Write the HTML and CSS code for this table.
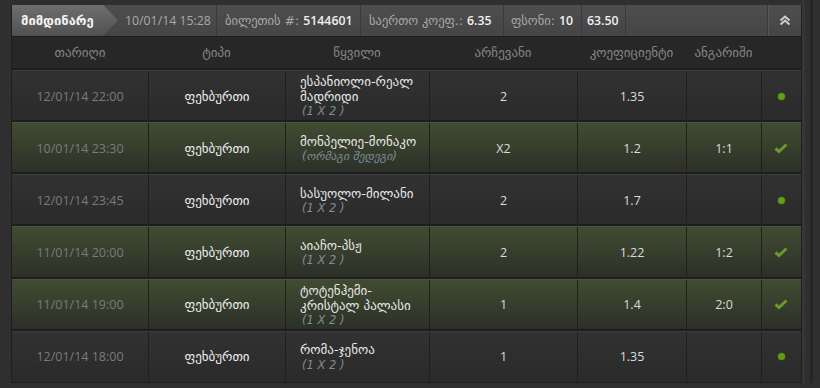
FILE: index.html
```html
<!DOCTYPE html>
<html>
<head>
<meta charset="utf-8">
<link rel="stylesheet" href="styles.css">
</head>
<body>
<div class="wrap">
  <div class="panel">
    <div class="bar">
      <div class="tab">მიმდინარე</div>
      <div class="bi w1">10/01/14 15:28</div>
      <div class="bi w2"><span class="ka">ბილეთის #:</span> <b>5144601</b></div>
      <div class="bi w3"><span class="ka">საერთო კოეფ.:</span> <b>6.35</b></div>
      <div class="bi w4"><span class="ka">ფსონი:</span> <b>10</b></div>
      <div class="bi w5"><b>63.50</b></div>
      <div class="bi fill"></div>
      <div class="bi up">
        <svg width="12" height="11" viewBox="0 0 12 11"><path d="M1.5 5.5 L6 1.5 L10.5 5.5 M1.5 9.5 L6 5.5 L10.5 9.5" fill="none" stroke="#d0d0d0" stroke-width="2"/></svg>
      </div>
    </div>
    <div class="grid head">
      <div>თარიღი</div><div>ტიპი</div><div>წყვილი</div><div>არჩევანი</div><div>კოეფიციენტი</div><div>ანგარიში</div><div></div>
    </div>
    <div class="grid row">
      <div class="date">12/01/14 22:00</div><div class="type">ფეხბურთი</div>
      <div class="match"><div><span>ესპანიოლი-რეალ</span><span>მადრიდი</span><i>(1 X 2 )</i></div></div>
      <div class="num">2</div><div class="num">1.35</div><div class="num"></div>
      <div class="st"><span class="dot"></span></div>
    </div>
    <div class="grid row win">
      <div class="date">10/01/14 23:30</div><div class="type">ფეხბურთი</div>
      <div class="match"><div><span>მონპელიე-მონაკო</span><i>(ორმაგი შედეგი)</i></div></div>
      <div class="num">X2</div><div class="num">1.2</div><div class="num">1:1</div>
      <div class="st"><svg width="14" height="11" viewBox="0 0 14 11"><path d="M1.5 5.5 L5 8.5 L12.5 1.5" fill="none" stroke="#6b9a2a" stroke-width="3"/></svg></div>
    </div>
    <div class="grid row">
      <div class="date">12/01/14 23:45</div><div class="type">ფეხბურთი</div>
      <div class="match"><div><span>სასუოლო-მილანი</span><i>(1 X 2 )</i></div></div>
      <div class="num">2</div><div class="num">1.7</div><div class="num"></div>
      <div class="st"><span class="dot"></span></div>
    </div>
    <div class="grid row win">
      <div class="date">11/01/14 20:00</div><div class="type">ფეხბურთი</div>
      <div class="match"><div><span>აიაჩო-პსჟ</span><i>(1 X 2 )</i></div></div>
      <div class="num">2</div><div class="num">1.22</div><div class="num">1:2</div>
      <div class="st"><svg width="14" height="11" viewBox="0 0 14 11"><path d="M1.5 5.5 L5 8.5 L12.5 1.5" fill="none" stroke="#6b9a2a" stroke-width="3"/></svg></div>
    </div>
    <div class="grid row win">
      <div class="date">11/01/14 19:00</div><div class="type">ფეხბურთი</div>
      <div class="match"><div><span>ტოტენჰემი-</span><span>კრისტალ პალასი</span><i>(1 X 2 )</i></div></div>
      <div class="num">1</div><div class="num">1.4</div><div class="num">2:0</div>
      <div class="st"><svg width="14" height="11" viewBox="0 0 14 11"><path d="M1.5 5.5 L5 8.5 L12.5 1.5" fill="none" stroke="#6b9a2a" stroke-width="3"/></svg></div>
    </div>
    <div class="grid row">
      <div class="date">12/01/14 18:00</div><div class="type">ფეხბურთი</div>
      <div class="match"><div><span>რომა-ჯენოა</span><i>(1 X 2 )</i></div></div>
      <div class="num">1</div><div class="num">1.35</div><div class="num"></div>
      <div class="st"><span class="dot"></span></div>
    </div>
  </div>
  <div class="side"></div>
</div>
</body>
</html>
```
FILE: styles.css
```css
html, body {
  margin: 0;
  padding: 0;
  background: #2f2f2f;
  font-family: "Open Sans", "DejaVu Sans", sans-serif;
  font-size: 12px;
  color: #d8d8d8;
}
.wrap {
  display: flex;
  padding: 5px 0 0 11px;
  height: 383px;
  box-sizing: border-box;
}
.panel {
  width: 791px;
  height: 378px;
  background: #262626;
  border-left: 1px solid #1f1f1f;
  border-right: 1px solid #1f1f1f;
  border-bottom: 1px solid #1c1c1c;
  box-sizing: border-box;
  display: flex;
  flex-direction: column;
}
.side {
  width: 3px;
  background: #363636;
  box-shadow: 8px 0 0 #282424;
  height: 388px;
  margin-top: -5px;
}
.ka {
  font-family: "DejaVu Sans", sans-serif;
}
.bar {
  height: 32px;
  display: flex;
  background: linear-gradient(#4e4e4e, #454545);
  border-bottom: 1px solid #1e1e1e;
  box-sizing: border-box;
  align-items: stretch;
  color: #a9a9a9;
}
.tab {
  width: 106px;
  background: linear-gradient(#6e6e6e, #515151);
  clip-path: polygon(0 0, 86% 0, 100% 50%, 86% 100%, 0 100%);
  font-family: "DejaVu Sans", sans-serif;
  font-weight: bold;
  color: #f2f2f2;
  display: flex;
  align-items: center;
  padding-left: 9px;
  box-sizing: border-box;
  font-size: 13px;
}
.bi {
  display: flex;
  align-items: center;
  border-right: 1px solid #3a3a3a;
  box-sizing: border-box;
  white-space: nowrap;
  font-family: "Open Sans", "DejaVu Sans", sans-serif;
  font-size: 12.3px;
}
.bi .ka {
  font-size: 12.5px;
  margin-right: 4px;
}
.bi b {
  color: #f0f0f0;
  font-weight: 600;
}
.w1 { width: 99px; padding-left: 7px; }
.w2 { width: 144px; padding-left: 8px; }
.w3 { width: 143px; padding-left: 8px; }
.w4 { width: 78px; padding-left: 7px; }
.w5 { width: 44px; padding-left: 5px; }
.fill { flex: 1; }
.up {
  width: 33px;
  border-right: none;
  border-left: 1px solid #575757;
  justify-content: center;
}
.grid {
  display: grid;
  grid-template-columns: 136px 137px 144px 148px 109px 75px 39px;
}
.head {
  height: 33px;
  align-items: center;
  color: #858585;
  font-family: "DejaVu Sans", sans-serif;
  font-size: 13px;
  text-align: center;
  background: #272727;
}
.row {
  height: 52px;
  background: linear-gradient(#323232, #2a2a2a);
  border-top: 1px solid #3b3b3b;
  box-sizing: border-box;
  box-shadow: 0 -2px 0 #1e1e1e;
  margin-top: 1px;
}
.row.win {
  background: linear-gradient(#404c31, #2c2f28);
  border-top-color: #4a5639;
}
.row > div {
  display: flex;
  align-items: center;
  justify-content: center;
  border-left: 1px solid #1f1f1f;
}
.row > div:first-child { border-left: none; }
.date {
  color: #7b7b7b;
  font-size: 12.5px;
}
.type {
  font-family: "DejaVu Sans", sans-serif;
  color: #ececec;
  font-size: 13px;
}
.row > .match {
  justify-content: flex-start;
  font-family: "DejaVu Sans", sans-serif;
  font-size: 13px;
  color: #e6e6e6;
  padding-left: 14px;
  text-align: left;
}
.match > div {
  display: flex;
  flex-direction: column;
  align-items: flex-start;
}
.match span {
  display: block;
  height: 15.2px;
  line-height: 15.2px;
  white-space: nowrap;
}
.match i {
  display: block;
  height: 14px;
  line-height: 14px;
  color: #7f8c99;
  font-size: 11.5px;
  font-family: "DejaVu Sans", sans-serif;
  padding-left: 2px;
  white-space: nowrap;
}
.num {
  color: #dcdcdc;
  font-size: 12.5px;
}
.dot {
  width: 7px;
  height: 7px;
  border-radius: 50%;
  background: #5e9e16;
  box-shadow: 0 0 2px #3b6a0a;
}
```
